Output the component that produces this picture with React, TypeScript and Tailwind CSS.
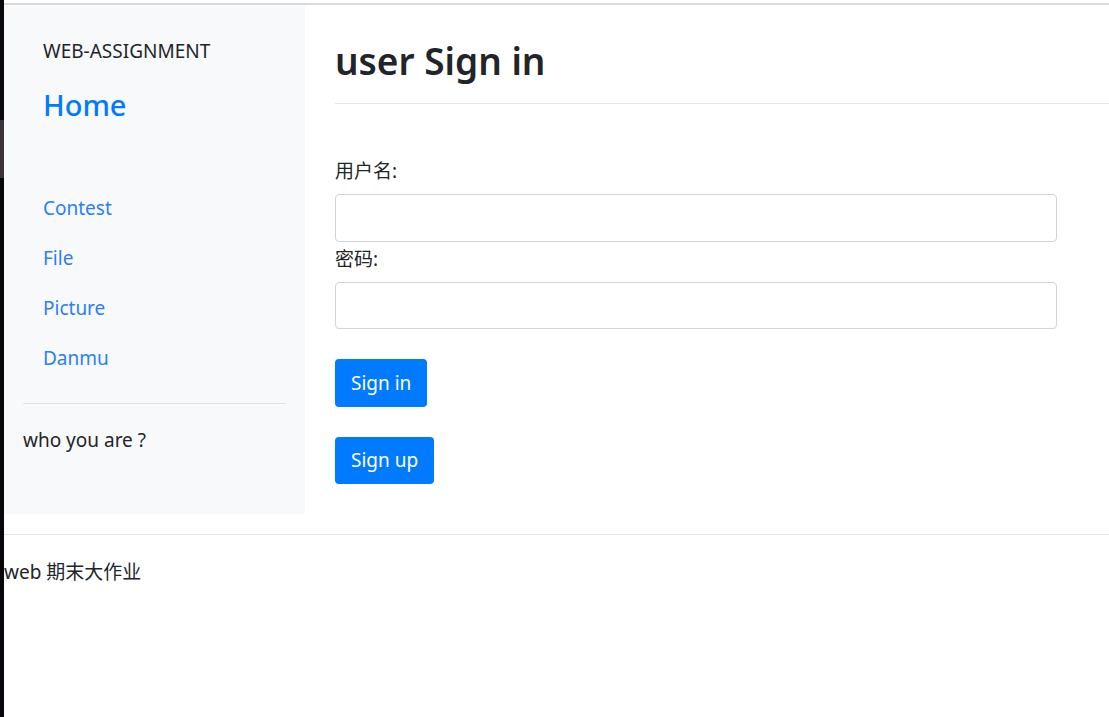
import React from 'react';

const navLinks = ['Contest', 'File', 'Picture', 'Danmu'];

export default function App() {
  return (
    <div
      className="flex min-h-[717px] w-[1109px] bg-white text-[#212529]"
      style={{ fontFamily: '"Noto Sans", "Noto Sans CJK SC", sans-serif' }}
    >
      {/* dark strip from the window behind */}
      <div className="flex w-[4px] shrink-0 flex-col">
        <div className="h-[120px] bg-[#0b0710]" />
        <div className="h-[58px] bg-[#3a3339]" />
        <div className="flex-1 bg-[#07060a]" />
      </div>

      <div className="flex flex-1 flex-col">
        <div className="h-[3px] bg-white" />
        <div className="h-[2px] bg-[#d9d9de]" />

        <div className="flex">
          {/* SIDEBAR */}
          <aside className="flex h-[509px] w-[301px] shrink-0 flex-col bg-[#f8f9fa]">
            <div className="mt-[34px] px-[39px] text-[19px] leading-[24px]">WEB-ASSIGNMENT</div>
            <div className="mt-[22px] px-[39px] text-[29px] font-medium leading-[40px] text-[#007bff]">Home</div>
            <nav className="mt-[58px] flex flex-col">
              {navLinks.map((l) => (
                <a key={l} href="#" className="flex h-[50px] items-center px-[39px] text-[19px] text-[#2a7ff7]">
                  {l}
                </a>
              ))}
            </nav>
            <div className="mx-[19px] mt-[20px] border-t border-[#dee2e6]" />
            <div className="mt-[24px] px-[19px] text-[19px] leading-[24px]">who you are ?</div>
          </aside>

          {/* MAIN */}
          <main className="flex-1 pl-[30px]">
            <div className="flex h-[99px] items-center border-b border-[#e5e5e5]">
              <h1 className="mt-[12px] text-[37px] font-semibold leading-none">user Sign in</h1>
            </div>
            <form className="mt-[55px] flex w-[722px] flex-col">
              <label className="text-[19px] leading-[24px]">用户名:</label>
              <input className="mt-[11px] h-[48px] rounded-[4px] border border-[#ced4da] bg-white" />
              <label className="mt-[5px] text-[19px] leading-[24px]">密码:</label>
              <input className="mt-[11px] h-[47px] rounded-[4px] border border-[#ced4da] bg-white" />
              <div className="mt-[30px] flex flex-col items-start gap-[30px]">
                <button type="button" className="h-[48px] rounded-[4px] bg-[#007bff] px-[16px] text-[19px] text-white">
                  Sign in
                </button>
                <button type="button" className="h-[47px] rounded-[4px] bg-[#007bff] px-[16px] text-[19px] text-white">
                  Sign up
                </button>
              </div>
            </form>
          </main>
        </div>

        <footer className="mt-[20px] border-t border-[#e5e5e5] pt-[25px]">
          <p className="text-[19px] leading-[24px]">web 期末大作业</p>
        </footer>
      </div>
    </div>
  );
}
